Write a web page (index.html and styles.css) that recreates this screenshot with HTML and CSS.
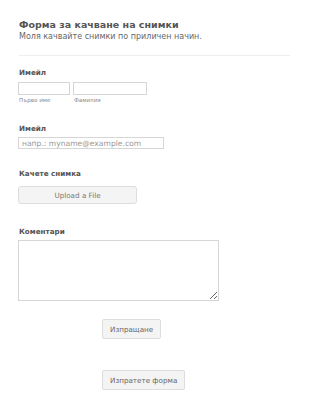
FILE: index.html
```html
<!DOCTYPE html>
<html lang="bg">
<head>
  <meta charset="UTF-8">
  <meta name="viewport" content="width=device-width, initial-scale=1.0">
  <title>Форма за качване на снимки</title>
  <link rel="stylesheet" href="styles.css">
</head>
<body>
  <div class="form">
    <!-- Header -->
    <div class="form-header">
      <h1>Форма за качване на снимки</h1>
      <p>Моля качвайте снимки по приличен начин.</p>
    </div>

    <!-- Name -->
    <div class="field field-first">
      <label>Имейл</label>
      <div class="name-row">
        <div class="name-part">
          <input type="text" class="input-first">
          <span class="sublabel">Първо име</span>
        </div>
        <div class="name-part">
          <input type="text" class="input-last">
          <span class="sublabel">Фамилия</span>
        </div>
      </div>
    </div>

    <!-- Email -->
    <div class="field">
      <label>Имейл</label>
      <input type="text" class="input-email" placeholder="напр.: myname@example.com">
    </div>

    <!-- Upload -->
    <div class="field">
      <label>Качете снимка</label>
      <button class="upload-btn">Upload a File</button>
    </div>

    <!-- Comments -->
    <div class="field field-comments">
      <label>Коментари</label>
      <textarea></textarea>
    </div>

    <div class="actions">
      <button class="btn">Изпращане</button>
      <button class="btn btn-second">Изпратете форма</button>
    </div>
  </div>
</body>
</html>
```

FILE: styles.css
```css
/* General Reset */
* {
  margin: 0;
  padding: 0;
  box-sizing: border-box;
  font-family: "DejaVu Sans", Verdana, sans-serif;
}

body {
  background-color: #fff;
  color: #555;
}

.form {
  padding: 19px 20px 0 19px;
  width: 310px;
}

/* Header */
.form-header {
  border-bottom: 1px solid #eee;
  padding-bottom: 13px;
}

.form-header h1 {
  font-size: 9.5px;
  line-height: 12px;
  font-weight: bold;
  color: #555;
}

.form-header p {
  font-size: 8px;
  line-height: 11px;
  color: #666;
}

/* Fields */
.field {
  margin-top: 20px;
}

.field-first {
  margin-top: 12px;
}

.field-comments {
  margin-top: 23px;
}

.field label {
  display: block;
  font-size: 7.2px;
  line-height: 10px;
  font-weight: bold;
  color: #555;
}

.name-row {
  display: flex;
  gap: 3px;
  margin-top: 4px;
  margin-left: -1px;
}

.name-part {
  display: flex;
  flex-direction: column;
}

input,
textarea {
  border: 1px solid #d6d6d6;
  background: #fff;
  outline: none;
}

.input-first {
  width: 52px;
  height: 13px;
}

.input-last {
  width: 74px;
  height: 13px;
}

.sublabel {
  font-size: 5.6px;
  line-height: 8px;
  margin-top: 1px;
  padding-left: 1px;
  color: #888;
}

.input-email {
  display: block;
  width: 146px;
  height: 12px;
  margin-top: 3px;
  margin-left: -1px;
  padding-left: 3px;
  font-size: 7.6px;
  color: #555;
}

.input-email::placeholder {
  color: #999;
}

.upload-btn {
  display: block;
  width: 119px;
  height: 18px;
  margin-top: 7px;
  margin-left: -1px;
  border: 1px solid #ddd;
  border-radius: 3px;
  background-color: #f4f4f4;
  color: #777;
  font-size: 7.2px;
}

textarea {
  display: block;
  width: 201px;
  height: 61px;
  margin-top: 3px;
  margin-left: -1px;
  resize: both;
}

/* Buttons */
.actions {
  display: flex;
  flex-direction: column;
  align-items: flex-start;
  padding-left: 83px;
}

.btn {
  height: 20px;
  padding: 0 7px;
  margin-top: 18px;
  border: 1px solid #ddd;
  border-radius: 2px;
  background-color: #f4f4f4;
  color: #666;
  font-size: 7.2px;
}

.btn-second {
  margin-top: 31px;
}
```
